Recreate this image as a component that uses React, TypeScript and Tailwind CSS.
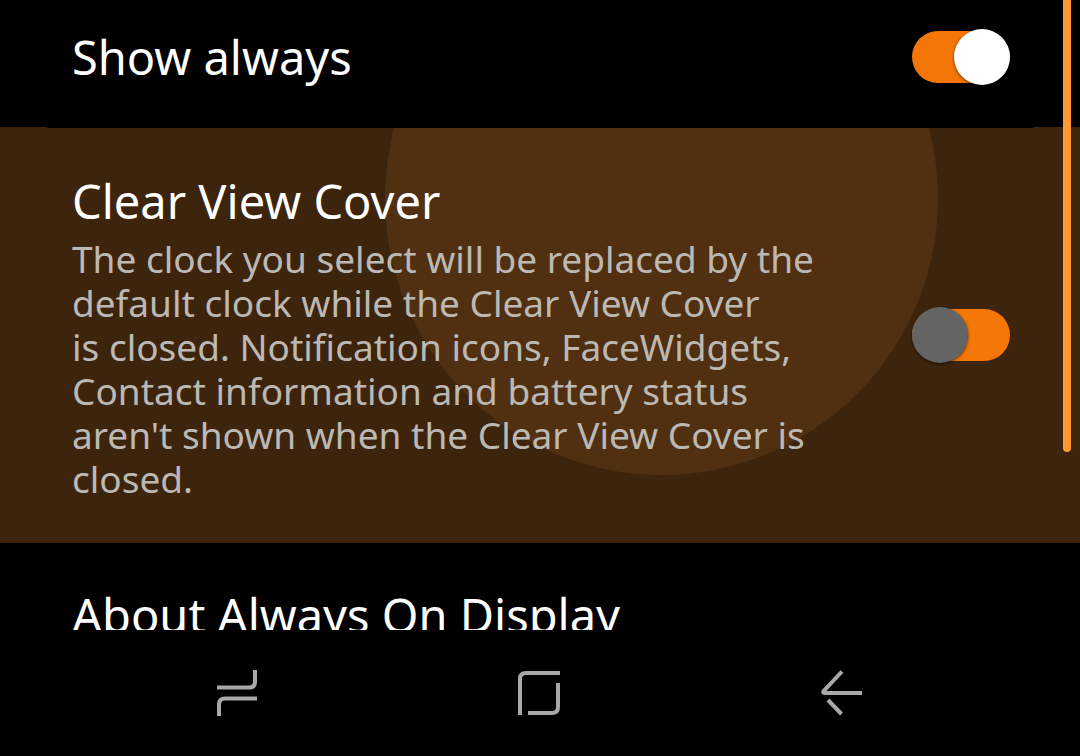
import { useState } from "react"

interface ToggleProps {
  id: string
  checked: boolean
  onChange: (checked: boolean) => void
}

function Toggle({ id, checked, onChange }: ToggleProps) {
  return (
    <input
      id={id}
      type="checkbox"
      role="switch"
      checked={checked}
      onChange={(e) => onChange(e.target.checked)}
      className="flex h-[52px] w-[98px] shrink-0 cursor-pointer appearance-none items-center rounded-full bg-[#f47607] before:block before:size-14 before:shrink-0 before:rounded-full before:bg-[#646464] before:shadow-[0_1px_3px_rgba(0,0,0,0.6)] before:content-[''] checked:justify-end checked:before:bg-white"
    />
  )
}

function NavBar() {
  return (
    <nav className="grid h-[126px] shrink-0 grid-cols-3 bg-black px-[86px] text-[#a8a8a8]">
      <button type="button" aria-label="Recent apps" className="flex items-center justify-center">
        <svg width="40" height="46" viewBox="0 0 40 46" fill="none" stroke="currentColor" strokeWidth="4">
          <path d="M0 17.5H32Q38 17.5 38 11.5V0" />
          <path d="M40 28.5H8Q2 28.5 2 34.5V46" />
        </svg>
      </button>
      <button type="button" aria-label="Home" className="flex items-center justify-center">
        <svg width="44" height="44" viewBox="0 0 44 44" fill="none" stroke="currentColor" strokeWidth="4">
          <path d="M2 44V8Q2 2 8 2H42" />
          <path d="M40 12V36Q40 42 34 42H10" />
        </svg>
      </button>
      <button type="button" aria-label="Back" className="flex items-center justify-center">
        <svg width="44" height="46" viewBox="0 0 44 46" fill="none" stroke="currentColor" strokeWidth="4">
          <path d="M21 1.500L3.500 20Q0.500 23 4 23H41" />
          <path d="M7 30L20.500 44" />
        </svg>
      </button>
    </nav>
  )
}

export default function App() {
  const [showAlways, setShowAlways] = useState(true)
  const [clearView, setClearView] = useState(false)

  return (
    <div className="relative flex h-screen flex-col overflow-hidden bg-black font-['Noto_Sans',sans-serif] text-white">
      <main className="min-h-0 flex-1 overflow-hidden">
        <section className="flex items-center justify-between pt-[25px] pr-[70px] pb-[38px] pl-[72px]">
          <label htmlFor="show-always" className="text-[47px] leading-[64px]">
            Show always
          </label>
          <Toggle id="show-always" checked={showAlways} onChange={setShowAlways} />
        </section>

        <section className="relative overflow-hidden bg-[#3d240d]">
          {/* touch ripple */}
          <div className="absolute -top-[205px] left-[385px] size-[553px] rounded-full bg-[#503011]" />
          <div className="absolute inset-x-[47px] top-0 h-px bg-black" />
          <div className="relative flex items-center justify-between pt-[42px] pr-[70px] pb-[42px] pl-[72px]">
            <div>
              <label htmlFor="clear-view" className="block text-[47px] leading-[64px]">
                Clear View Cover
              </label>
              <p className="mt-1 text-[37px] leading-[44px] text-[#bcb8b4]">
                The clock you select will be replaced by the
                <br />
                default clock while the Clear View Cover
                <br />
                is closed. Notification icons, FaceWidgets,
                <br />
                Contact information and battery status
                <br />
                aren't shown when the Clear View Cover is
                <br />
                closed.
              </p>
            </div>
            <Toggle id="clear-view" checked={clearView} onChange={setClearView} />
          </div>
        </section>

        <section className="pt-10 pr-[70px] pl-[72px]">
          <h2 className="text-[47px] leading-[64px]">About Always On Display</h2>
        </section>
      </main>

      <NavBar />

      {/* scroll indicator */}
      <div className="absolute top-0 right-[9px] h-[452px] w-2 rounded-b-full bg-[#ff9833]" />
    </div>
  )
}
